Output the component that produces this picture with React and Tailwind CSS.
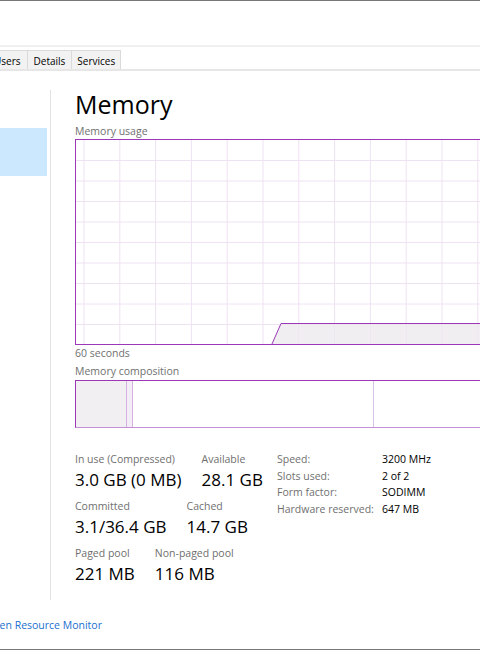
import React from 'react';

const PURPLE = '#9a38b8';

const UsageGraph = () => {
    const vLines = Array.from({ length: 12 }, (_, i) => 8 + i * 35.8);
    const hLines = Array.from({ length: 9 }, (_, i) => 20.5 * (i + 1));
    return (
        <svg width="418" height="204" className="block">
            {vLines.map((x) => (
                <line key={'v' + x} x1={x} y1="0" x2={x} y2="204" stroke="#efe2f3" strokeWidth="1" />
            ))}
            {hLines.map((y) => (
                <line key={'h' + y} x1="0" y1={y} x2="418" y2={y} stroke="#efe2f3" strokeWidth="1" />
            ))}
            <polygon points="196,204 205,183.5 418,183.5 418,204" fill="#ece8ee" fillOpacity="0.75" />
            <polyline points="196,204 205,183.5 418,183.5" fill="none" stroke={PURPLE} strokeWidth="1" />
        </svg>
    );
};

const Stat = ({ label, value }) => (
    <div className="flex flex-col">
        <span className="text-[10.5px] leading-[14px] text-[#6f6f6f]">{label}</span>
        <span className="mt-[3px] text-[17px] leading-[22px] text-black">{value}</span>
    </div>
);

const specs = [
    ['Speed:', '3200 MHz'],
    ['Slots used:', '2 of 2'],
    ['Form factor:', 'SODIMM'],
    ['Hardware reserved:', '647 MB'],
];

export default function App() {
    return (
        <div
            className="w-[480px] h-[650px] bg-white border-t border-b border-[#777777] flex flex-col overflow-hidden"
            style={{ fontFamily: '"Open Sans", "Noto Sans", sans-serif' }}
        >
            {/* title bar area */}
            <div className="h-[44px] shrink-0" />
            <div className="h-[2px] bg-[#f0f0f0] shrink-0" />
            <div className="h-[3px] shrink-0" />

            {/* tabs */}
            <div className="h-[19px] flex shrink-0 text-[10px] leading-[14px] text-black">
                <div className="ml-[-13px] px-[6px] pt-[2px] flex items-center bg-[#f2f2f2] border-l border-r border-t border-[#dadada]">Users</div>
                <div className="px-[6px] pt-[2px] flex items-center bg-[#f2f2f2] border-r border-t border-[#dadada]">Details</div>
                <div className="px-[5px] pt-[2px] flex items-center bg-[#f2f2f2] border-r border-t border-[#dadada]">Services</div>
            </div>
            <div className="h-[2px] bg-[#e6e6e6] shrink-0" />

            {/* body */}
            <div className="h-[535px] flex shrink-0">
                {/* sidebar */}
                <div className="w-[51px] shrink-0 pt-[19px]">
                    <div className="h-[510px] border-r border-[#e3e3e3] pt-[38px] pr-[3px]">
                        <div className="h-[48px] bg-[#cce8ff]" />
                    </div>
                </div>

                {/* main */}
                <div className="pl-[24px] pt-[18px] flex flex-col">
                    <h1 className="text-[25px] leading-[30px] text-black">Memory</h1>
                    <div className="mt-[5px] text-[10.5px] leading-[14px] text-[#707070]">Memory usage</div>
                    <div className="mt-[1px] w-[420px] h-[206px] border" style={{ borderColor: PURPLE }}>
                        <UsageGraph />
                    </div>
                    <div className="mt-[1px] text-[10.5px] leading-[14px] text-[#707070]">60 seconds</div>
                    <div className="mt-[4px] text-[10.5px] leading-[14px] text-[#707070]">Memory composition</div>

                    {/* composition bar */}
                    <div
                        className="mt-[2px] w-[420px] h-[48px] flex border-t border-l border-b"
                        style={{ borderTopColor: PURPLE, borderLeftColor: PURPLE, borderBottomColor: '#c48ed8' }}
                    >
                        <div className="w-[50px] bg-[#f1eff2]" />
                        <div className="w-[7px] bg-[#f4ecf7] border-l border-r border-[#d4b3e0]" />
                        <div className="w-[241px] border-r border-[#dcc4e6]" />
                        <div className="flex-1" />
                    </div>

                    {/* stats */}
                    <div className="mt-[24px] flex">
                        <div className="w-[202px] shrink-0 flex flex-col gap-[8px]">
                            <div className="flex gap-[20px]">
                                <Stat label="In use (Compressed)" value="3.0 GB (0 MB)" />
                                <Stat label="Available" value="28.1 GB" />
                            </div>
                            <div className="flex gap-[20px]">
                                <Stat label="Committed" value="3.1/36.4 GB" />
                                <Stat label="Cached" value="14.7 GB" />
                            </div>
                            <div className="flex gap-[20px]">
                                <Stat label="Paged pool" value="221 MB" />
                                <Stat label="Non-paged pool" value="116 MB" />
                            </div>
                        </div>
                        <div className="-mt-[1px] flex flex-col text-[10.5px] leading-[16.7px]">
                            {specs.map(([k, v]) => (
                                <div key={k} className="flex">
                                    <span className="w-[105px] shrink-0 text-[#6f6f6f]">{k}</span>
                                    <span className="text-black">{v}</span>
                                </div>
                            ))}
                        </div>
                    </div>
                </div>
            </div>

            {/* footer */}
            <div className="pt-[12px] shrink-0 text-[10.5px] leading-[14px]">
                <div className="ml-[-15px] text-[#1a6fcf] whitespace-nowrap">Open Resource Monitor</div>
            </div>
        </div>
    );
}
